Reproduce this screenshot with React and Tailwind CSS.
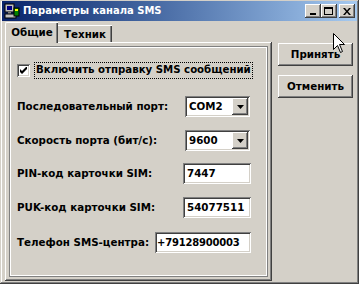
import React from 'react'

const raised = 'shadow-[inset_-1px_-1px_#404040,inset_1px_1px_#ffffff,inset_-2px_-2px_#808080,inset_2px_2px_#d4d0c8]'
const sunken = 'shadow-[inset_1px_1px_#808080,inset_-1px_-1px_#ffffff,inset_2px_2px_#404040,inset_-2px_-2px_#d4d0c8]'

function AppIcon() {
  return (
    <svg width="16" height="16" viewBox="0 0 16 16" className="shrink-0">
      <rect x="1" y="1" width="9" height="8" fill="#c0c0c0" stroke="#000" strokeWidth="1" />
      <rect x="3" y="3" width="5" height="4" fill="#000080" />
      <rect x="4" y="9" width="3" height="2" fill="#808080" />
      <rect x="1" y="11" width="11" height="4" fill="#c0c0c0" stroke="#000" strokeWidth="1" />
      <rect x="10" y="5" width="5" height="8" fill="#008000" stroke="#000" strokeWidth="1" />
      <rect x="11" y="6" width="3" height="2" fill="#ffff00" />
    </svg>
  )
}

function TitleButton({ children }) {
  return (
    <div className={`w-[16px] h-[14px] bg-[#d4d0c8] flex items-center justify-center ${raised}`}>
      {children}
    </div>
  )
}

function Combo({ value }) {
  return (
    <div className={`w-[65px] h-[21px] bg-white flex items-center p-[2px] ${sunken}`}>
      <span className="flex-1 pl-[2px] leading-none">{value}</span>
      <div className={`w-[16px] h-[17px] bg-[#d4d0c8] flex items-center justify-center ${raised}`}>
        <svg width="7" height="4" viewBox="0 0 7 4">
          <path d="M0 0h7L3.5 4z" fill="#000" />
        </svg>
      </div>
    </div>
  )
}

function Field({ value, className }) {
  return (
    <div className={`h-[21px] bg-white flex items-center px-[4px] overflow-hidden whitespace-nowrap ${sunken} ${className}`}>
      <span className="leading-none">{value}</span>
    </div>
  )
}

function Row({ label, children, className }) {
  return (
    <div className={`flex items-center h-[21px] ${className}`}>
      <span className="leading-none whitespace-nowrap">{label}</span>
      <div className="ml-auto">{children}</div>
    </div>
  )
}

function Button({ children, className }) {
  return (
    <div className={`w-[75px] h-[23px] bg-[#d4d0c8] flex items-center justify-center ${raised} ${className}`}>
      {children}
    </div>
  )
}

export default function App() {
  return (
    <div className="relative w-[359px] h-[284px] overflow-hidden bg-[#d4d0c8] text-black text-[10.3px] font-bold font-['DejaVu_Sans',sans-serif]">
      <div className="w-full h-full px-[2px] pt-[1px] pb-[3px] shadow-[inset_-1px_-1px_#404040,inset_1px_1px_#d4d0c8,inset_-2px_-2px_#808080,inset_2px_2px_#ffffff]">
        {/* title bar */}
        <div className="h-[20px] flex items-center pl-[2px] pr-[2px] bg-gradient-to-r from-[#0a246a] to-[#a6caf0]">
          <AppIcon />
          <span className="ml-[3px] text-white text-[10px] leading-none">Параметры канала SMS</span>
          <div className="ml-auto flex items-center">
            <TitleButton>
              <div className="w-[6px] h-[2px] bg-black mt-[6px] -ml-[1px]" />
            </TitleButton>
            <TitleButton>
              <div className="w-[9px] h-[8px] border border-black border-t-2 -ml-[1px]" />
            </TitleButton>
            <div className="ml-[2px]">
              <TitleButton>
                <svg width="8" height="7" viewBox="0 0 8 7" className="-ml-[1px]">
                  <path d="M0 0h2l2 2.5L6 0h2L5 3.5 8 7H6L4 4.5 2 7H0l3-3.5z" fill="#000" />
                </svg>
              </TitleButton>
            </div>
          </div>
        </div>

        {/* body */}
        <div className="flex pl-[3px] pt-[1px]">
          {/* tab control */}
          <div className="w-[267px] flex flex-col">
            <div className="flex items-end h-[21px]">
              <div className="relative z-10 h-[21px] w-[53px] bg-[#d4d0c8] flex items-center justify-center border-l border-t border-white shadow-[inset_-1px_0_#404040,inset_-2px_0_#808080] rounded-tl-[2px]">
                <span className="leading-none -mt-[1px]">Общие</span>
              </div>
              <div className="h-[18px] w-[54px] bg-[#d4d0c8] flex items-center justify-center border-t border-white shadow-[inset_-1px_0_#404040,inset_-2px_0_#808080]">
                <span className="leading-none">Техник</span>
              </div>
            </div>
            <div className="-mt-[1px] h-[239px] p-[4px] bg-[#d4d0c8] shadow-[inset_-1px_-1px_#404040,inset_1px_1px_#ffffff,inset_-2px_-2px_#808080]">
              <div className="h-full pl-[8px] pr-[17px] pt-[16px] shadow-[inset_1px_1px_#808080,inset_-1px_-1px_#808080,inset_2px_2px_#ffffff,inset_-2px_-2px_#ffffff]">
                <div className="flex items-center h-[17px]">
                  <div className={`shrink-0 w-[13px] h-[13px] bg-white flex items-center justify-center ${sunken}`}>
                    <svg width="7" height="7" viewBox="0 0 7 7">
                      <path d="M0 2v3l2 2 5-5V-1L2 4z" fill="#000" />
                    </svg>
                  </div>
                  <span className="ml-[4px] h-[17px] px-[1px] flex items-center whitespace-nowrap text-[10.2px] border border-dotted border-black leading-none">
                    Включить отправку SMS сообщений
                  </span>
                </div>
                <Row label="Последовательный порт:" className="mt-[17px]">
                  <div className="mr-[1px]"><Combo value="COM2" /></div>
                </Row>
                <Row label="Скорость порта (бит/с):" className="mt-[13px]">
                  <div className="mr-[1px]"><Combo value="9600" /></div>
                </Row>
                <Row label="PIN-код карточки SIM:" className="mt-[12px]">
                  <Field value="7447" className="w-[68px]" />
                </Row>
                <Row label="PUK-код карточки SIM:" className="mt-[13px]">
                  <Field value="54077511" className="w-[68px]" />
                </Row>
                <Row label="Телефон SMS-центра:" className="mt-[14px]">
                  <Field value="+79128900003" className="w-[96px] !px-[2px] text-[10px] tracking-[-0.2px]" />
                </Row>
              </div>
            </div>
          </div>

          {/* buttons */}
          <div className="ml-[6px] pt-[21px] flex flex-col">
            <Button>Принять</Button>
            <Button className="mt-[9px]">Отменить</Button>
          </div>
        </div>
      </div>

      {/* mouse cursor */}
      <svg width="13" height="21" viewBox="0 0 13 21" className="absolute left-[333px] top-[33px]">
        <path d="M0.5 0.5V16.5L4.5 12.5L7.5 19.5L9.5 18.5L6.5 11.5H11.5Z" fill="#fff" stroke="#000" strokeWidth="1" />
      </svg>
    </div>
  )
}
